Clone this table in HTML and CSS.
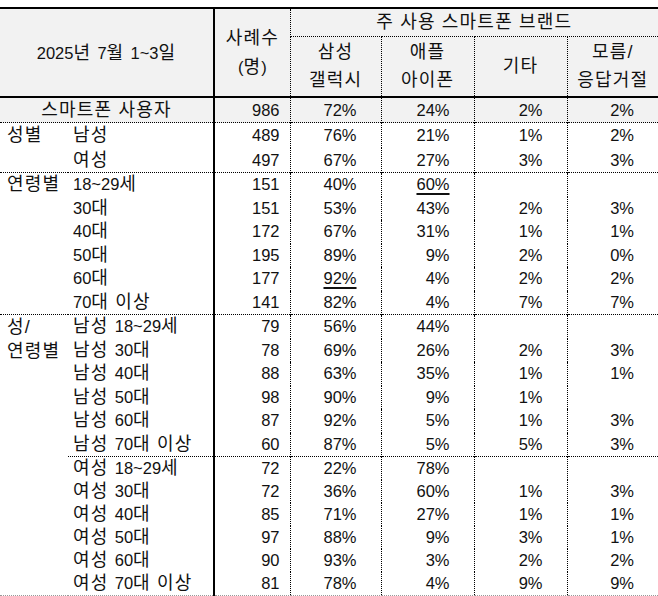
FILE: index.html
```html
<!DOCTYPE html>
<html lang="ko">
<head>
<meta charset="utf-8">
<link rel="stylesheet" href="styles.css">
</head>
<body>
<table class="t">
<colgroup><col class="c1"><col class="c2"><col class="c3"><col class="c4"><col class="c5"><col class="c6"><col class="c7"></colgroup>
<thead>
<tr class="h1">
<th colspan="2" rowspan="2" class="date hb"><span class="num">2025</span>년 <span class="num">7</span>월 <span class="num">1~3</span>일</th>
<th rowspan="2" class="cnt hb s">사례수<br><span class="num">(</span>명<span class="num">)</span></th>
<th colspan="4" class="brand d">주 사용 스마트폰 브랜드</th>
</tr>
<tr class="h2">
<th class="d hb">삼성<br>갤럭시</th>
<th class="d hb">애플<br>아이폰</th>
<th class="d hb">기타</th>
<th class="d hb">모름/<br>응답거절</th>
</tr>
</thead>
<tbody>
<tr class="total"><td colspan="2" class="tl">스마트폰 사용자</td><td class="n s">986</td><td class="p d">72%</td><td class="p d">24%</td><td class="p d">2%</td><td class="p d">2%</td></tr>

<tr class="g gs"><td rowspan="2" class="cat">성별</td><td class="sub">남성</td><td class="n s">489</td><td class="p d">76%</td><td class="p d">21%</td><td class="p d">1%</td><td class="p d">2%</td></tr>
<tr class="g"><td class="sub">여성</td><td class="n s">497</td><td class="p d">67%</td><td class="p d">27%</td><td class="p d">3%</td><td class="p d">3%</td></tr>

<tr class="a gs"><td rowspan="6" class="cat">연령별</td><td class="sub"><span class="num">18~29</span>세</td><td class="n s">151</td><td class="p d">40%</td><td class="p d"><span class="u">60%</span></td><td class="p d"></td><td class="p d"></td></tr>
<tr class="a"><td class="sub"><span class="num">30</span>대</td><td class="n s">151</td><td class="p d">53%</td><td class="p d">43%</td><td class="p d">2%</td><td class="p d">3%</td></tr>
<tr class="a"><td class="sub"><span class="num">40</span>대</td><td class="n s">172</td><td class="p d">67%</td><td class="p d">31%</td><td class="p d">1%</td><td class="p d">1%</td></tr>
<tr class="a"><td class="sub"><span class="num">50</span>대</td><td class="n s">195</td><td class="p d">89%</td><td class="p d">9%</td><td class="p d">2%</td><td class="p d">0%</td></tr>
<tr class="a"><td class="sub"><span class="num">60</span>대</td><td class="n s">177</td><td class="p d"><span class="u">92%</span></td><td class="p d">4%</td><td class="p d">2%</td><td class="p d">2%</td></tr>
<tr class="a"><td class="sub"><span class="num">70</span>대 이상</td><td class="n s">141</td><td class="p d">82%</td><td class="p d">4%</td><td class="p d">7%</td><td class="p d">7%</td></tr>

<tr class="m gs"><td rowspan="12" class="cat last">성/<br>연령별</td><td class="sub">남성 <span class="num">18~29</span>세</td><td class="n s">79</td><td class="p d">56%</td><td class="p d">44%</td><td class="p d"></td><td class="p d"></td></tr>
<tr class="m"><td class="sub">남성 <span class="num">30</span>대</td><td class="n s">78</td><td class="p d">69%</td><td class="p d">26%</td><td class="p d">2%</td><td class="p d">3%</td></tr>
<tr class="m"><td class="sub">남성 <span class="num">40</span>대</td><td class="n s">88</td><td class="p d">63%</td><td class="p d">35%</td><td class="p d">1%</td><td class="p d">1%</td></tr>
<tr class="m"><td class="sub">남성 <span class="num">50</span>대</td><td class="n s">98</td><td class="p d">90%</td><td class="p d">9%</td><td class="p d">1%</td><td class="p d"></td></tr>
<tr class="m"><td class="sub">남성 <span class="num">60</span>대</td><td class="n s">87</td><td class="p d">92%</td><td class="p d">5%</td><td class="p d">1%</td><td class="p d">3%</td></tr>
<tr class="m"><td class="sub">남성 <span class="num">70</span>대 이상</td><td class="n s">60</td><td class="p d">87%</td><td class="p d">5%</td><td class="p d">5%</td><td class="p d">3%</td></tr>

<tr class="f gs"><td class="sub">여성 <span class="num">18~29</span>세</td><td class="n s">72</td><td class="p d">22%</td><td class="p d">78%</td><td class="p d"></td><td class="p d"></td></tr>
<tr class="f"><td class="sub">여성 <span class="num">30</span>대</td><td class="n s">72</td><td class="p d">36%</td><td class="p d">60%</td><td class="p d">1%</td><td class="p d">3%</td></tr>
<tr class="f"><td class="sub">여성 <span class="num">40</span>대</td><td class="n s">85</td><td class="p d">71%</td><td class="p d">27%</td><td class="p d">1%</td><td class="p d">1%</td></tr>
<tr class="f"><td class="sub">여성 <span class="num">50</span>대</td><td class="n s">97</td><td class="p d">88%</td><td class="p d">9%</td><td class="p d">3%</td><td class="p d">1%</td></tr>
<tr class="f"><td class="sub">여성 <span class="num">60</span>대</td><td class="n s">90</td><td class="p d">93%</td><td class="p d">3%</td><td class="p d">2%</td><td class="p d">2%</td></tr>
<tr class="f lastrow"><td class="sub">여성 <span class="num">70</span>대 이상</td><td class="n s">81</td><td class="p d">78%</td><td class="p d">4%</td><td class="p d">9%</td><td class="p d">9%</td></tr>
</tbody>
</table>
</body>
</html>
```
FILE: styles.css
```css
html, body {
  margin: 0;
  padding: 0;
  background: #fff;
}
body {
  font-family: "Liberation Sans", "Noto Sans CJK KR", sans-serif;
  font-size: 18px;
  letter-spacing: 1.2px;
  color: #111;
}
.num, .n, .p {
  font-family: "Liberation Sans", sans-serif;
  font-size: 16.5px;
  letter-spacing: 0;
}
.num { line-height: 16px; }
.t {
  margin-top: 7px;
  width: 658px;
  border-collapse: collapse;
  table-layout: fixed;
}
.c1 { width: 68px; }
.c2 { width: 146px; }
.c3 { width: 76px; }
.c4 { width: 91px; }
.c5 { width: 93px; }
.c6 { width: 93px; }
.c7 { width: 91px; }

th, td {
  padding: 0;
  font-weight: normal;
  white-space: nowrap;
}
thead th {
  background: #f2f2f2;
  text-align: center;
  vertical-align: middle;
  line-height: 28px;
}
.h1 th { border-top: 2px solid #000; }
.h1 { height: 28px; }
.h2 { height: 61px; }
.hb { border-bottom: 2px solid #000; }
.cnt { line-height: 29px; }
.brand { border-bottom: 1px dotted #000; line-height: 26px; }

.s { border-left: 2px solid #000; }
.d { border-left: 1px dotted #000; }

tbody td { line-height: 23.5px; height: 23.5px; }
tr.g td { height: 24.5px; line-height: 24.5px; }
tr.f td { height: 23px; line-height: 23px; }
tr.total td { background: #f2f2f2; height: 24px; line-height: 24px; }
.tl { text-align: center; }
tr.gs td { border-top: 1px dotted #000; }
tr.lastrow td, td.last { border-bottom: 1px dotted #999; }

.cat { vertical-align: top; padding-left: 7px; }
tr.m .cat { line-height: 24px; }
.sub { padding-left: 5px; }
.n { text-align: right; padding-right: 10px; }
.p { text-align: right; padding-right: 24px; }
.u {
  text-decoration: underline;
  text-decoration-thickness: 2px;
  text-underline-offset: 3px;
}
```
